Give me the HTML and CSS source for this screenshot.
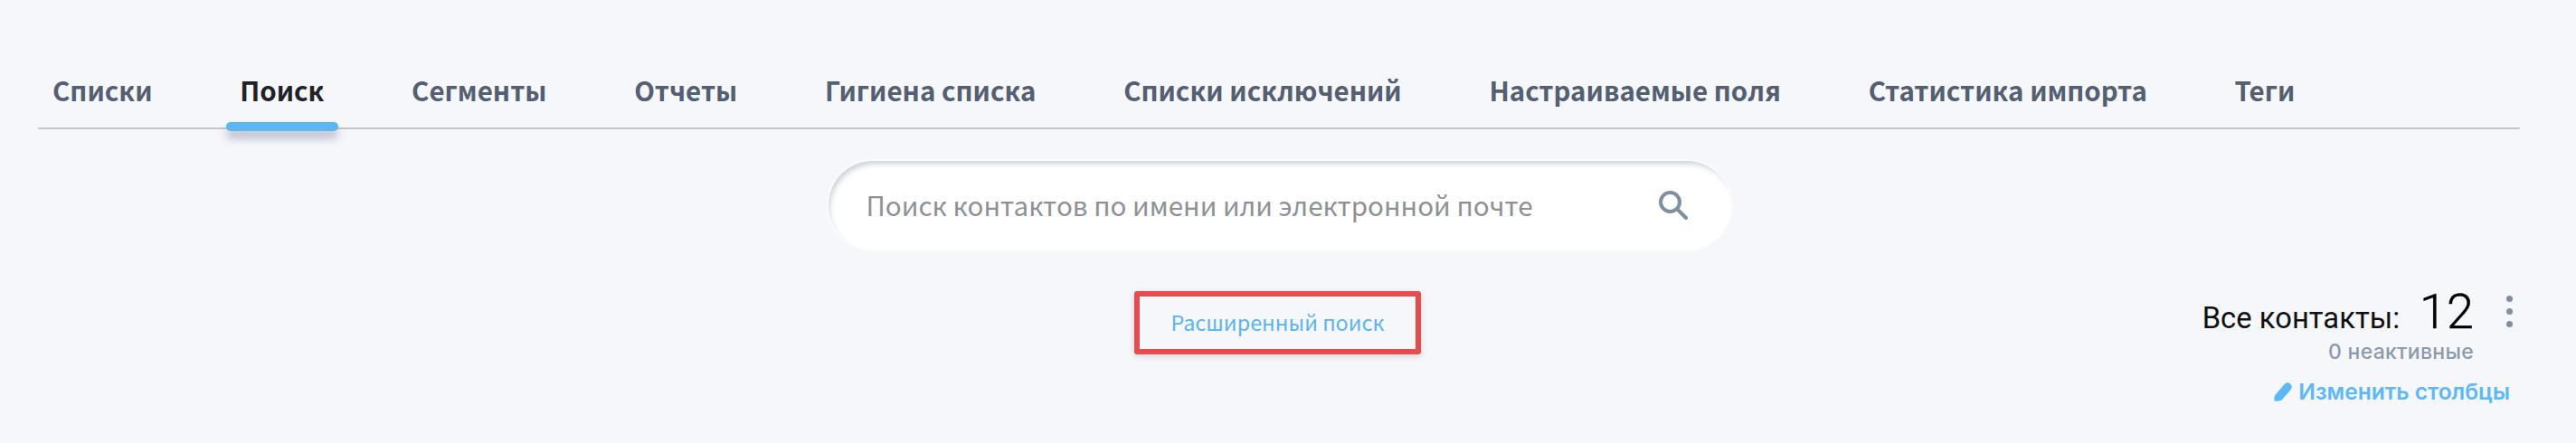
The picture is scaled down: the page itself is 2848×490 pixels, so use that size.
FILE: index.html
```html
<!DOCTYPE html>
<html lang="ru">
<head>
<meta charset="utf-8">
<title>Поиск</title>
<link rel="stylesheet" href="styles.css">
</head>
<body>
<div class="page">
  <nav class="tabs">
    <a class="tab">Списки</a>
    <a class="tab active">Поиск</a>
    <a class="tab">Сегменты</a>
    <a class="tab">Отчеты</a>
    <a class="tab">Гигиена списка</a>
    <a class="tab">Списки исключений</a>
    <a class="tab">Настраиваемые поля</a>
    <a class="tab">Статистика импорта</a>
    <a class="tab">Теги</a>
  </nav>
  <div class="search-row">
    <div class="search">
      <span class="placeholder">Поиск контактов по имени или электронной почте</span>
      <svg class="search-icon" viewBox="0 0 32 32" width="32" height="32"><circle cx="12.500" cy="12.500" r="10.500" fill="none" stroke="#7f8fa0" stroke-width="4"/><path d="M20.500 20.500L30 30" stroke="#7f8fa0" stroke-width="4" stroke-linecap="round"/></svg>
    </div>
  </div>
  <div class="bottom">
    <span></span>
    <a class="advanced">Расширенный поиск</a>
    <div class="summary">
      <div class="total">
        <span class="total-label">Все контакты:</span>
        <span class="total-num">12</span>
        <span class="dots"><i></i><i></i><i></i></span>
      </div>
      <div class="inactive">0 неактивные</div>
      <a class="edit">
        <svg class="pencil" viewBox="0 0 20 21" width="20" height="21"><path d="M0.6 20.4c-.5-2.6-.3-5.3 1.2-7L11.6 2a4.6 4.6 0 0 1 6.500-.6 4.6 4.600 0 0 1 .6 6.500L8.900 19.300c-1.600 1.500-5.300 1.500-8.300 1.100z" fill="#5cb8f6"/></svg>
        Изменить столбцы
      </a>
    </div>
  </div>
</div>
</body>
</html>
```

FILE: styles.css
```css
* { box-sizing: border-box; }
html, body { margin: 0; height: 100%; background: #f6f7fb; }
body { overflow: hidden; }
.page { padding: 0 62px 0 42px; height: 490px; }
.tabs {
  display: flex;
  align-items: flex-end;
  gap: 96.7px;
  height: 143px;
  padding: 0 0 0 16px;
  border-bottom: 2px solid #c3c5c9;
}
.tab {
  position: relative;
  height: 62px;
  font: 700 29.5px/40px "Noto Sans CJK SC", "Noto Sans", sans-serif;
  color: #545f71;
  white-space: nowrap;
}
.tab.active { color: #1f2329; }
.tab.active::after {
  content: "";
  position: absolute;
  left: -15px;
  right: -16px;
  bottom: -4px;
  height: 10px;
  border-radius: 5px;
  background: #5ab6f7;
  box-shadow: 0 8px 10px rgba(70, 80, 100, .35);
}
.search-row { display: flex; justify-content: center; padding-top: 35px; }
.search {
  display: flex;
  align-items: center;
  justify-content: space-between;
  width: 998px;
  height: 98px;
  margin-left: 1px;
  padding: 0 48px 0 42px;
  border-radius: 49px;
  background: #fff;
  box-shadow: inset 3px 5px 6px -2px #c9d0d8, 0 0 3px 1px #fff;
}
.placeholder {
  font: 400 29.6px/40px "Noto Sans CJK SC", "Noto Sans", sans-serif;
  color: #8d9196;
}
.bottom { display: grid; grid-template-columns: 1fr auto 1fr; align-items: start; }
.advanced {
  margin: 46px 3px 0 0;
  width: 317px;
  height: 70px;
  padding-bottom: 2px;
  display: flex;
  align-items: center;
  justify-content: center;
  border: 6px solid #e34d50;
  border-radius: 3px;
  box-shadow: 0 2px 6px rgba(100, 60, 60, .2);
  font: 400 23.4px/30px "Noto Sans CJK SC", "Noto Sans", sans-serif;
  color: #5cb4ee;
}
.summary {
  margin: 39px 8px 0 0;
  display: flex;
  flex-direction: column;
  align-items: flex-end;
  justify-self: end;
}
.total { display: flex; align-items: baseline; height: 59px; }
.total-label { font: 400 32.8px/40px Roboto, sans-serif; color: #111; margin-right: 22px; }
.total-num { font: 300 54px/60px Roboto, sans-serif; color: #000; margin-right: 36px; -webkit-text-stroke: .4px #000; }
.dots { display: flex; flex-direction: column; gap: 7px; align-self: center; }
.dots i { width: 7px; height: 7px; border-radius: 50%; background: #7f8fa4; }
.inactive { font: 500 23px/30px Inter, sans-serif; color: #8d9aab; margin-right: 43px; letter-spacing: .3px; }
.edit { display: flex; align-items: center; gap: 7px; margin: 12px 3px 0 0; font: 600 24.6px/34px Inter, sans-serif; color: #5cb8f6; }
.pencil { flex: none; }
```
